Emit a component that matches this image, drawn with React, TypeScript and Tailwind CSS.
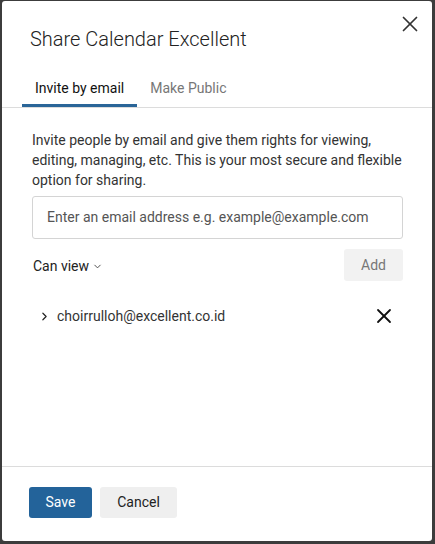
import { ChevronDown, ChevronRight, X } from "lucide-react";

export default function App() {
  return (
    <div
      className="w-[435px] h-[544px] bg-[#3c3c3c] pt-px pl-[2px] pr-[3px] pb-[3px]"
      style={{ fontFamily: "Roboto, 'Liberation Sans', sans-serif" }}
    >
      <div className="relative flex h-full flex-col rounded-[3px] bg-white text-[#222]">
        {/* Close */}
        <button className="absolute right-[9px] top-[10px] text-[#333]">
          <X className="size-[26px]" strokeWidth={1.6} />
        </button>

        {/* Header */}
        <h1 className="pl-[28px] pt-[24px] text-[20px] font-light leading-[28px] text-[#222]">
          Share Calendar Excellent
        </h1>

        {/* Tabs */}
        <div className="mt-[26px] flex border-b border-[#dcdcdc] pl-[20px]">
          <div className="border-b-[3px] border-[#2a6598] px-[13px] pb-[7px] text-[14px] leading-[18px] text-[#111]">
            Invite by email
          </div>
          <div className="px-[13px] pb-[7px] text-[14px] leading-[18px] text-[#777]">
            Make Public
          </div>
        </div>

        {/* Body */}
        <div className="flex-1 pl-[30px] pr-[29px] pt-[22px]">
          <p className="text-[14px] leading-[20px] text-[#333]">
            Invite people by email and give them rights for viewing, editing,
            managing, etc. This is your most secure and flexible option for
            sharing.
          </p>

          <div className="mt-[6px] flex h-[43px] items-center rounded-[3px] border border-[#d4d4d4] px-[14px] text-[14px] text-[#555]">
            Enter an email address e.g. example@example.com
          </div>

          <div className="mt-[10px] flex items-start justify-between">
            <div className="mt-[9px] flex items-center gap-[3px] pl-px text-[14px] leading-[17px] text-[#222]">
              Can view
              <ChevronDown className="size-[11px] text-[#444]" strokeWidth={2} />
            </div>
            <button className="flex h-[32px] w-[59px] items-center justify-center rounded-[3px] bg-[#f2f2f2] text-[14px] text-[#777]">
              Add
            </button>
          </div>

          <div className="mt-[23px] flex items-center justify-between pl-[6px] pr-[7px]">
            <div className="flex items-center gap-[6px] text-[14px] text-[#333]">
              <ChevronRight className="size-[13px] text-[#222]" strokeWidth={2.2} />
              choirrulloh@excellent.co.id
            </div>
            <X className="size-[24px] text-[#111]" strokeWidth={1.8} />
          </div>
        </div>

        {/* Footer */}
        <div className="flex gap-[8px] border-t border-[#dcdcdc] px-[27px] pb-[23px] pt-[20px]">
          <button className="h-[31px] w-[63px] rounded-[3px] bg-[#23639a] text-[14px] text-white">
            Save
          </button>
          <button className="h-[31px] w-[77px] rounded-[3px] bg-[#efefef] text-[14px] text-[#222]">
            Cancel
          </button>
        </div>
      </div>
    </div>
  );
}
